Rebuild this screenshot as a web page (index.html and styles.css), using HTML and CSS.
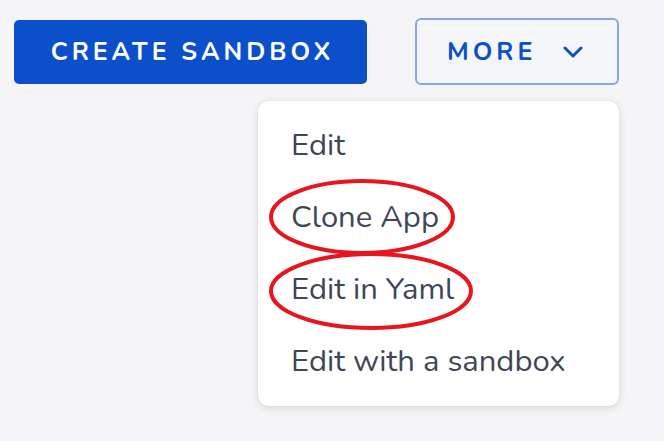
FILE: index.html
```html
<!DOCTYPE html>
<html>
<head>
<meta charset="utf-8">
<link rel="stylesheet" href="styles.css">
</head>
<body>
<div class="page">
  <div class="toolbar">
    <button class="btn-primary">CREATE SANDBOX</button>
    <div class="more-wrap">
      <button class="btn-more">MORE
        <svg class="chev" width="20" height="12" viewBox="0 0 20 12"><path d="M2 2 L10 10 L18 2" fill="none" stroke="#0b4fcb" stroke-width="3" stroke-linecap="round" stroke-linejoin="round"/></svg>
      </button>
      <div class="menu">
        <div class="item">Edit</div>
        <div class="item">Clone App</div>
        <div class="item">Edit in Yaml</div>
        <div class="item">Edit with a sandbox</div>
        <svg class="marks" width="361" height="305" viewBox="0 0 361 305">
          <ellipse cx="104" cy="116" rx="91" ry="36" fill="none" stroke="#e8141e" stroke-width="4"/>
          <ellipse cx="113" cy="190" rx="100" ry="37" fill="none" stroke="#e8141e" stroke-width="4"/>
        </svg>
      </div>
    </div>
  </div>
</div>
</body>
</html>
```

FILE: styles.css
```css
html, body {
  margin: 0;
  padding: 0;
  background: #f5f5f8;
  font-family: "Nunito", "Lato", "Open Sans", sans-serif;
}
.page {
  width: 664px;
  height: 441px;
  overflow: hidden;
}
.toolbar {
  display: flex;
  align-items: flex-start;
  padding: 18px 0 0 14px;
  gap: 48px;
}
.btn-primary {
  margin-top: 2px;
  width: 353px;
  height: 64px;
  background: #0b4fcb;
  color: #fff;
  border: none;
  border-radius: 5px;
  font-family: inherit;
  font-weight: 700;
  font-size: 25px;
  letter-spacing: 4px;
  text-indent: 4px;
  padding: 0;
}
.more-wrap {
  position: relative;
  width: 204px;
}
.btn-more {
  box-sizing: border-box;
  width: 204px;
  height: 67px;
  border: 2px solid #86a6e9;
  border-radius: 6px;
  background: #f5f6fa;
  color: #0b4fcb;
  font-family: inherit;
  font-weight: 700;
  font-size: 25px;
  letter-spacing: 4px;
  display: flex;
  align-items: center;
  padding: 0 0 0 30px;
  gap: 27px;
}
.chev { display: block; }
.menu {
  position: absolute;
  top: 83px;
  left: -157px;
  width: 361px;
  box-sizing: border-box;
  background: #fff;
  border-radius: 10px;
  box-shadow: 0 2px 8px rgba(0,0,0,0.12), 0 0 1px rgba(0,0,0,0.15);
  padding: 8px 0 9px;
}
.item {
  height: 72px;
  display: flex;
  align-items: center;
  padding-left: 33px;
  font-size: 31px;
  color: #3e4758;
}
.marks {
  position: absolute;
  left: 0;
  top: 0;
  pointer-events: none;
}
```
